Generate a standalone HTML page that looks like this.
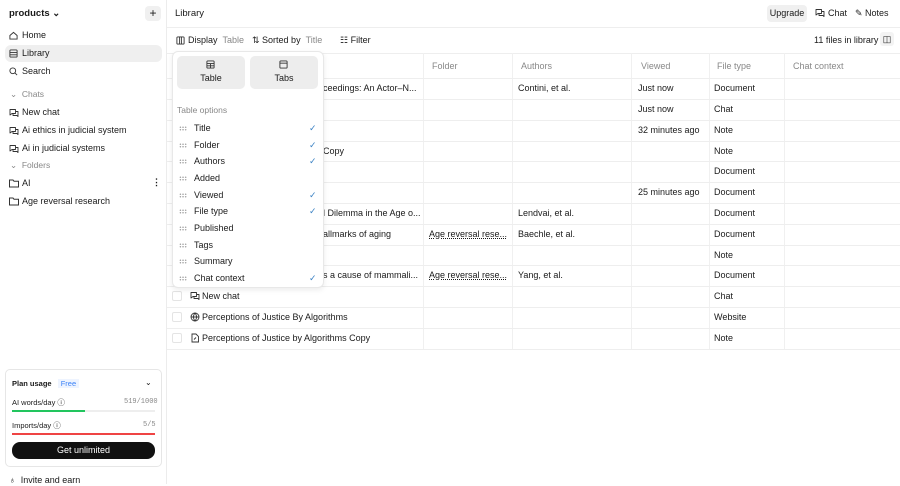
<!DOCTYPE html><html><head><style>
*{box-sizing:border-box;margin:0;padding:0}
body{width:900px;height:484px;overflow:hidden;font-family:"Liberation Sans",sans-serif;font-size:9px;color:#1a1a1a;background:#fff;position:relative}
.a{position:absolute;white-space:nowrap;line-height:11px}
.side{position:absolute;left:0;top:0;width:167px;height:484px;border-right:1px solid #ececec;background:#fff}
.g{color:#888}
.hl{position:absolute;height:1px;background:#eeeeee}
.vl{position:absolute;width:1px;background:#f0f0f0}
svg{position:absolute}
.dots{position:absolute;width:8px;height:5px;background-image:radial-gradient(circle,#999 0.6px,transparent 0.8px);background-size:2.7px 2.5px}
.ck{position:absolute;left:309px;color:#3b82c4;font-size:9px;line-height:11px}
</style></head><body>
<svg width="0" height="0" style="position:absolute"><defs><symbol id="chat" viewBox="0 0 10 10"><path d="M1 1.5H6.5V5.5H3L1 7Z" fill="none" stroke="#333" stroke-width=".9" stroke-linejoin="round"/><path d="M6.5 3.5H9V8.5L8 7.5H4V5.5" fill="none" stroke="#333" stroke-width=".9" stroke-linejoin="round"/></symbol></defs></svg>
<div class="side">
<div class="a" style="left:9px;top:8px;font-weight:bold;font-size:9.5px">products ⌄</div>
<div class="a" style="left:145px;top:6px;width:16px;height:15px;background:#f0f0f0;border-radius:4px;text-align:center;line-height:14px;font-size:12px">+</div>
<div class="a" style="left:5px;top:45px;width:157px;height:17px;background:#efefef;border-radius:6px"></div>
<svg style="left:9px;top:31px" width="9" height="9" viewBox="0 0 10 10" fill="none" stroke="#333"><path d="M1 5L5 1.5 9 5V9H1Z"/></svg>
<div class="a" style="left:22px;top:30px">Home</div>
<svg style="left:9px;top:49px" width="9" height="9" viewBox="0 0 10 10" fill="none" stroke="#333"><rect x="1" y="1" width="8" height="8" rx="1"/><path d="M1 4H9M1 6.5H9"/></svg>
<div class="a" style="left:22px;top:48px">Library</div>
<svg style="left:9px;top:67px" width="9" height="9" viewBox="0 0 10 10" fill="none" stroke="#333"><circle cx="4.2" cy="4.2" r="3.2"/><path d="M6.5 6.5L9 9"/></svg>
<div class="a" style="left:22px;top:66px">Search</div>
<div class="a g" style="left:10px;top:89px;font-size:8.5px">⌄&nbsp; Chats</div>
<svg style="left:9px;top:108px" width="10" height="10"><use href="#chat"/></svg>
<div class="a" style="left:22px;top:107px">New chat</div>
<svg style="left:9px;top:126px" width="10" height="10"><use href="#chat"/></svg>
<div class="a" style="left:22px;top:125px">Ai ethics in judicial system</div>
<svg style="left:9px;top:144px" width="10" height="10"><use href="#chat"/></svg>
<div class="a" style="left:22px;top:143px">Ai in judicial systems</div>
<div class="a g" style="left:10px;top:160px;font-size:8.5px">⌄&nbsp; Folders</div>
<svg style="left:9px;top:179px" width="10" height="9" viewBox="0 0 10 9" fill="none" stroke="#333"><path d="M.5 1H4L5 2.2H9.5V8H.5Z"/></svg>
<div class="a" style="left:22px;top:178px">AI</div>
<div class="a" style="left:152px;top:177px;font-weight:bold">⋮</div>
<svg style="left:9px;top:197px" width="10" height="9" viewBox="0 0 10 9" fill="none" stroke="#333"><path d="M.5 1H4L5 2.2H9.5V8H.5Z"/></svg>
<div class="a" style="left:22px;top:196px">Age reversal research</div>
<div class="a" style="left:5px;top:369px;width:157px;height:98px;border:1px solid #e6e6e6;border-radius:5px"></div>
<div class="a" style="left:12px;top:378px;font-size:7.5px;font-weight:bold">Plan usage <span style="color:#3b82f6;font-weight:normal;background:#eef4ff;padding:0 3px;margin-left:4px">Free</span></div>
<div class="a" style="left:145px;top:377px;font-size:8px">⌄</div>
<div class="a" style="left:12px;top:397px;font-size:7.5px">AI words/day ⓘ</div>
<div class="a g" style="left:124px;top:397px;font-size:7px;font-family:'Liberation Mono'">519/1000</div>
<div class="a" style="left:12px;top:410px;width:143px;height:2px;background:#eee"></div>
<div class="a" style="left:12px;top:410px;width:73px;height:2px;background:#22c55e"></div>
<div class="a" style="left:12px;top:420px;font-size:7.5px">Imports/day ⓘ</div>
<div class="a g" style="left:143px;top:420px;font-size:7px;font-family:'Liberation Mono'">5/5</div>
<div class="a" style="left:12px;top:433px;width:143px;height:2px;background:#ef4444"></div>
<div class="a" style="left:12px;top:442px;width:143px;height:17px;background:#111;border-radius:8px;color:#fff;text-align:center;line-height:17px;font-size:9px">Get unlimited</div>
<div class="a" style="left:9px;top:475px">♁&nbsp;&nbsp;Invite and earn</div>
</div>

<div class="a" style="left:175px;top:8px;font-size:9.5px">Library</div>
<div class="a" style="left:767px;top:5px;width:40px;height:17px;background:#f0f0f0;border-radius:4px;line-height:17px;text-align:center">Upgrade</div>
<svg style="left:815px;top:8px" width="10" height="10"><use href="#chat"/></svg>
<div class="a" style="left:828px;top:8px">Chat</div>
<div class="a" style="left:855px;top:8px">✎ Notes</div>
<div class="hl" style="left:167px;top:27px;width:733px"></div>
<svg style="left:176px;top:36px" width="9" height="9" viewBox="0 0 10 10" fill="none" stroke="#333"><rect x="1" y="1" width="8" height="8" rx="1"/><path d="M4 1V9M6 1V9"/></svg>
<div class="a" style="left:188px;top:35px">Display <span class="g">&nbsp;Table</span></div>
<div class="a" style="left:252px;top:35px">⇅ Sorted by <span class="g">&nbsp;Title</span></div>
<div class="a" style="left:340px;top:35px">☷ Filter</div>
<div class="a" style="left:814px;top:35px">11 files in library</div>
<div class="a" style="left:880px;top:32px;width:14px;height:14px;background:#f3f3f3;border-radius:3px;text-align:center;line-height:14px">◫</div>
<div class="hl" style="left:167px;top:53px;width:733px"></div>

<div class="vl" style="left:423px;top:53px;height:297px"></div>
<div class="vl" style="left:512px;top:53px;height:297px"></div>
<div class="vl" style="left:631px;top:53px;height:297px"></div>
<div class="vl" style="left:709px;top:53px;height:297px"></div>
<div class="vl" style="left:784px;top:53px;height:297px"></div>
<div class="a g" style="left:432px;top:61px">Folder</div>
<div class="a g" style="left:521px;top:61px">Authors</div>
<div class="a g" style="left:641px;top:61px">Viewed</div>
<div class="a g" style="left:717px;top:61px">File type</div>
<div class="a g" style="left:793px;top:61px">Chat context</div>
<div class="hl" style="left:167px;top:78px;width:733px"></div>
<div class="hl" style="left:167px;top:99px;width:733px"></div>
<div class="hl" style="left:167px;top:120px;width:733px"></div>
<div class="hl" style="left:167px;top:141px;width:733px"></div>
<div class="hl" style="left:167px;top:161px;width:733px"></div>
<div class="hl" style="left:167px;top:182px;width:733px"></div>
<div class="hl" style="left:167px;top:203px;width:733px"></div>
<div class="hl" style="left:167px;top:224px;width:733px"></div>
<div class="hl" style="left:167px;top:245px;width:733px"></div>
<div class="hl" style="left:167px;top:265px;width:733px"></div>
<div class="hl" style="left:167px;top:286px;width:733px"></div>
<div class="hl" style="left:167px;top:307px;width:733px"></div>
<div class="hl" style="left:167px;top:328px;width:733px"></div>
<div class="hl" style="left:167px;top:349px;width:733px"></div>

<div class="a" style="left:323px;top:83px">ceedings: An Actor–N...</div>
<div class="a" style="left:323px;top:146px">Copy</div>
<div class="a" style="left:323px;top:208px">l Dilemma in the Age o...</div>
<div class="a" style="left:323px;top:229px">allmarks of aging</div>
<div class="a" style="left:323px;top:270px">s a cause of mammali...</div>
<div class="a" style="left:429px;top:229px;text-decoration:underline dotted">Age reversal rese...</div>
<div class="a" style="left:429px;top:270px;text-decoration:underline dotted">Age reversal rese...</div>
<div class="a" style="left:518px;top:83px">Contini, et al.</div>
<div class="a" style="left:518px;top:208px">Lendvai, et al.</div>
<div class="a" style="left:518px;top:229px">Baechle, et al.</div>
<div class="a" style="left:518px;top:270px">Yang, et al.</div>
<div class="a" style="left:638px;top:83px">Just now</div>
<div class="a" style="left:638px;top:104px">Just now</div>
<div class="a" style="left:638px;top:125px">32 minutes ago</div>
<div class="a" style="left:638px;top:187px">25 minutes ago</div>
<div class="a" style="left:714px;top:83px">Document</div>
<div class="a" style="left:714px;top:104px">Chat</div>
<div class="a" style="left:714px;top:125px">Note</div>
<div class="a" style="left:714px;top:146px">Note</div>
<div class="a" style="left:714px;top:166px">Document</div>
<div class="a" style="left:714px;top:187px">Document</div>
<div class="a" style="left:714px;top:208px">Document</div>
<div class="a" style="left:714px;top:229px">Document</div>
<div class="a" style="left:714px;top:250px">Note</div>
<div class="a" style="left:714px;top:270px">Document</div>
<div class="a" style="left:714px;top:291px">Chat</div>
<div class="a" style="left:714px;top:312px">Website</div>
<div class="a" style="left:714px;top:333px">Note</div>
<div class="a" style="left:172px;top:291px;width:10px;height:10px;border:1px solid #e4e4e4;border-radius:2px"></div>
<div class="a" style="left:172px;top:312px;width:10px;height:10px;border:1px solid #e4e4e4;border-radius:2px"></div>
<div class="a" style="left:172px;top:333px;width:10px;height:10px;border:1px solid #e4e4e4;border-radius:2px"></div>
<svg style="left:190px;top:291px" width="10" height="10"><use href="#chat"/></svg>
<div class="a" style="left:202px;top:291px">New chat</div>
<svg style="left:190px;top:312px" width="10" height="10" viewBox="0 0 10 10" fill="none" stroke="#333" stroke-width=".9"><circle cx="5" cy="5" r="4"/><path d="M1 5H9M5 1C3 3.5 3 6.5 5 9M5 1C7 3.5 7 6.5 5 9"/></svg>
<div class="a" style="left:202px;top:312px">Perceptions of Justice By Algorithms</div>
<svg style="left:190px;top:333px" width="10" height="10" viewBox="0 0 10 10" fill="none" stroke="#333" stroke-width=".9"><path d="M2 1H6L8.5 3.5V9H2Z"/><path d="M4 6.5L6 4.5"/></svg>
<div class="a" style="left:202px;top:333px">Perceptions of Justice by Algorithms Copy</div>

<div class="a" style="left:172px;top:51px;width:152px;height:237px;background:#fff;border:1px solid #e8e8e8;border-radius:6px;box-shadow:0 2px 6px rgba(0,0,0,.08)"></div>
<div class="a" style="left:177px;top:56px;width:68px;height:33px;background:#ededed;border-radius:5px"></div>
<svg style="left:206px;top:60px" width="9" height="9" viewBox="0 0 10 10" fill="none" stroke="#333"><rect x="1" y="1" width="8" height="8" rx="1"/><path d="M1 4H9M1 6.5H9M5 4V9"/></svg>
<div class="a" style="left:177px;top:73px;width:68px;text-align:center">Table</div>
<div class="a" style="left:250px;top:56px;width:68px;height:33px;background:#ededed;border-radius:5px"></div>
<svg style="left:279px;top:60px" width="9" height="9" viewBox="0 0 10 10" fill="none" stroke="#333"><rect x="1" y="1" width="8" height="8" rx="1"/><path d="M1 3.5H9"/></svg>
<div class="a" style="left:250px;top:73px;width:68px;text-align:center">Tabs</div>
<div class="a g" style="left:177px;top:105px;font-size:8.5px">Table options</div>

<div class="dots" style="left:179px;top:126px"></div><div class="a" style="left:194px;top:123px">Title</div>
<div class="dots" style="left:179px;top:143px"></div><div class="a" style="left:194px;top:140px">Folder</div>
<div class="dots" style="left:179px;top:159px"></div><div class="a" style="left:194px;top:156px">Authors</div>
<div class="dots" style="left:179px;top:176px"></div><div class="a" style="left:194px;top:173px">Added</div>
<div class="dots" style="left:179px;top:193px"></div><div class="a" style="left:194px;top:190px">Viewed</div>
<div class="dots" style="left:179px;top:209px"></div><div class="a" style="left:194px;top:206px">File type</div>
<div class="dots" style="left:179px;top:226px"></div><div class="a" style="left:194px;top:223px">Published</div>
<div class="dots" style="left:179px;top:243px"></div><div class="a" style="left:194px;top:240px">Tags</div>
<div class="dots" style="left:179px;top:259px"></div><div class="a" style="left:194px;top:256px">Summary</div>
<div class="dots" style="left:179px;top:276px"></div><div class="a" style="left:194px;top:273px">Chat context</div>
<div class="ck" style="top:123px">✓</div>
<div class="ck" style="top:140px">✓</div>
<div class="ck" style="top:156px">✓</div>
<div class="ck" style="top:190px">✓</div>
<div class="ck" style="top:206px">✓</div>
<div class="ck" style="top:273px">✓</div>
</body></html>
